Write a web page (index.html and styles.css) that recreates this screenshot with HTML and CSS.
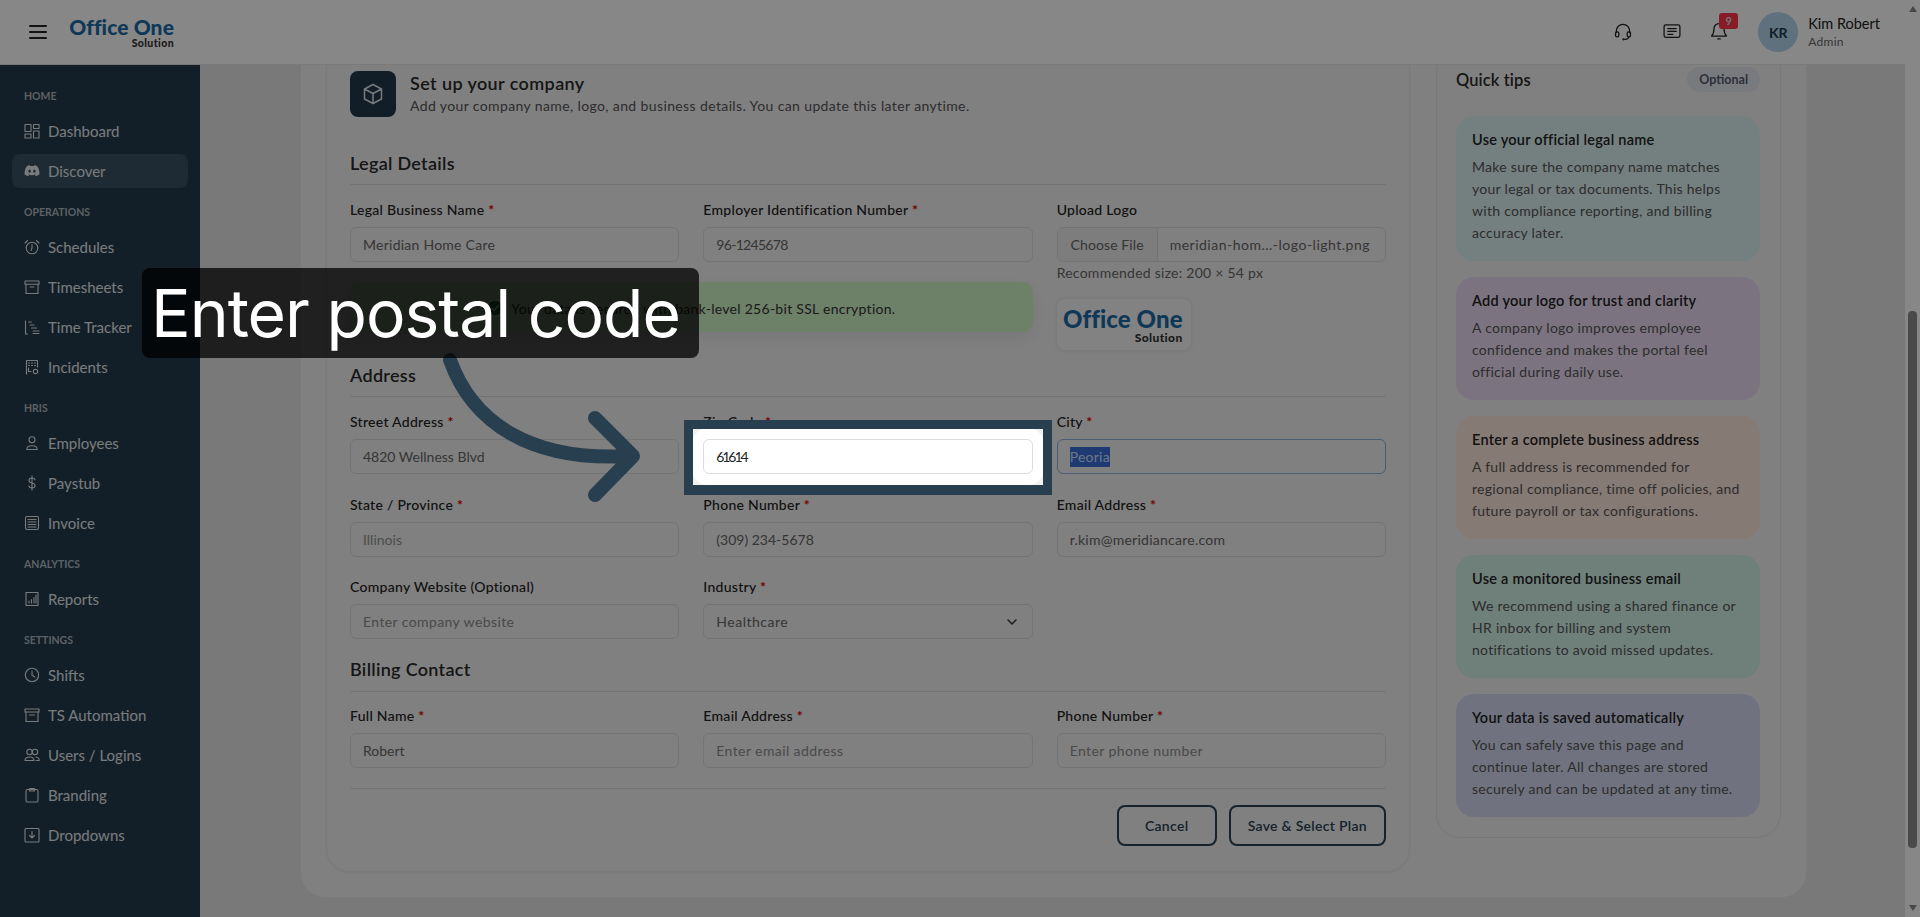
FILE: index.html
```html
<!DOCTYPE html>
<html lang="en">
<head>
<meta charset="utf-8">
<title>Office One Solution</title>
<link rel="stylesheet" href="styles.css">
</head>
<body>
<div class="app">
  <header class="topbar">
    <button class="burger" aria-label="Menu"><span></span><span></span><span></span></button>
    <div class="logo"><span class="logo-main">Office One</span><span class="logo-sub">Solution</span></div>
    <div class="top-actions">
      <svg class="top-icon" viewBox="0 0 24 24"><path d="M4 14v-2a8 8 0 0 1 16 0v2"/><rect x="3" y="13" width="4" height="6" rx="1.6"/><rect x="17" y="13" width="4" height="6" rx="1.6"/><path d="M19 19c0 2-2 3-5 3"/><circle cx="12.5" cy="22" r=".6"/></svg>
      <svg class="top-icon" viewBox="0 0 24 24"><rect x="2.5" y="4.5" width="19" height="15" rx="2"/><path d="M7 9h10M7 12.5h10M7 16h6"/></svg>
      <div class="bell">
        <svg class="top-icon" viewBox="0 0 24 24"><path d="M12 3a6 6 0 0 0-6 6c0 5-1 7-3 9h18c-2-2-3-4-3-9a6 6 0 0 0-6-6z"/><path d="M10.5 21.5h3"/></svg>
        <span class="badge">9</span>
      </div>
      <div class="avatar">KR</div>
      <div class="who"><div class="who-name">Kim Robert</div><div class="who-role">Admin</div></div>
    </div>
  </header>
  <div class="body-row">
    <nav class="sidebar">
      <div class="nav-label">Home</div>
      <a class="nav-item"><svg viewBox="0 0 16 16"><rect x="1" y="1.5" width="6" height="7"/><rect x="9.5" y="1.5" width="5.5" height="4"/><rect x="1" y="11" width="6" height="4"/><rect x="9.5" y="8" width="5.5" height="7"/></svg>Dashboard</a>
      <a class="nav-item active"><svg viewBox="0 0 16 16" class="solid"><path d="M13.2 3.2A12 12 0 0 0 10.2 2.3l-.4.8a11 11 0 0 0-3.6 0l-.4-.8a12 12 0 0 0-3 .9C.9 6 .4 8.7.6 11.4a12 12 0 0 0 3.7 1.9l.8-1.3-1.2-.6.3-.2a8.600 8.600 0 0 0 7.600 0l.3.2-1.2.6.8 1.3a12 12 0 0 0 3.700-1.900c.3-3.100-.5-5.800-2.200-8.200zM5.600 9.800c-.7 0-1.300-.7-1.300-1.500s.6-1.500 1.300-1.500 1.300.7 1.300 1.500-.6 1.500-1.300 1.500zm4.800 0c-.7 0-1.300-.7-1.300-1.500s.6-1.500 1.300-1.500 1.300.7 1.300 1.500-.6 1.500-1.300 1.500z"/></svg>Discover</a>
      <div class="nav-label">Operations</div>
      <a class="nav-item"><svg viewBox="0 0 16 16"><circle cx="8" cy="9" r="5.800"/><path d="M8 5.500V9l-1 2.500M1 4l2.500-2.500M15 4l-2.500-2.500"/></svg>Schedules</a>
      <a class="nav-item"><svg viewBox="0 0 16 16"><rect x="1" y="2" width="14" height="3.200"/><path d="M2 5.200V14.500h12V5.200M6 8h4"/></svg>Timesheets</a>
      <a class="nav-item"><svg viewBox="0 0 16 16"><path d="M1.500 2v13M1.500 15h2M4.500 3h3M6 6h4M7.500 9h5M9 12h6M9 14.500h6"/></svg>Time Tracker</a>
      <a class="nav-item"><svg viewBox="0 0 16 16"><path d="M2.500 15V1.500h11V8M4.500 4h1M7.500 4h1M10.500 4h1M4.500 6.500h1M7.500 6.500h1M10.500 6.500h1M4.500 9v3.500h2.500"/><circle cx="11.500" cy="12.500" r="2.200"/></svg>Incidents</a>
      <div class="nav-label">HRIS</div>
      <a class="nav-item"><svg viewBox="0 0 16 16"><circle cx="8" cy="4.800" r="3"/><path d="M2.800 14.500c0-2.600 1.800-3.800 5.200-3.800s5.200 1.200 5.200 3.800z"/></svg>Employees</a>
      <a class="nav-item"><svg viewBox="0 0 16 16"><path d="M11 4.800C10.500 3.500 9.500 3 8 3c-1.800 0-3 .9-3 2.400C5 9 11 7 11 10.600 11 12.100 9.800 13 8 13c-1.600 0-2.700-.6-3.200-2M8 1v14"/></svg>Paystub</a>
      <a class="nav-item"><svg viewBox="0 0 16 16"><rect x="1.500" y="1.500" width="13" height="13" rx="1.500"/><path d="M4 4.500h8M4 7h8M4 9.500h8M4 12h8"/></svg>Invoice</a>
      <div class="nav-label">Analytics</div>
      <a class="nav-item"><svg viewBox="0 0 16 16"><path d="M2 1.500h12v13H2zM5 12V10M7.500 12V8.500M10 12V6.500M12 12V4"/></svg>Reports</a>
      <div class="nav-label">Settings</div>
      <a class="nav-item"><svg viewBox="0 0 16 16"><circle cx="8" cy="8" r="6.700"/><path d="M8 4v4.300l2.800 1.700"/></svg>Shifts</a>
      <a class="nav-item"><svg viewBox="0 0 16 16"><rect x="1" y="2" width="14" height="3"/><path d="M2 5v9.500h12V5M5.500 8h5"/></svg>TS Automation</a>
      <a class="nav-item"><svg viewBox="0 0 16 16"><circle cx="5.500" cy="5" r="2.700"/><circle cx="11" cy="5" r="2.700"/><path d="M1 13.500c0-2.500 1.800-3.500 4.500-3.500s4.500 1 4.500 3.500zM12 10c2 .2 3.200 1.300 3.200 3.500H12"/></svg>Users / Logins</a>
      <a class="nav-item"><svg viewBox="0 0 16 16"><rect x="2" y="2.500" width="12" height="12.500" rx="1.500"/><path d="M5.500 1.500h5v2.500h-5z"/></svg>Branding</a>
      <a class="nav-item"><svg viewBox="0 0 16 16"><rect x="1" y="1.500" width="14" height="13.500" rx="1"/><path d="M8 4.500v6.500M5.500 8.500 8 11l2.500-2.500"/></svg>Dropdowns</a>
    </nav>
    <main class="content">
      <div class="page-card">
        <section class="form-card">
          <div class="intro">
            <div class="intro-icon"><svg viewBox="0 0 24 24"><path d="M12 2.500 20.500 7v10L12 21.500 3.500 17V7zM3.500 7 12 11.500 20.500 7M12 11.500v10"/></svg></div>
            <div><h1>Set up your company</h1><p>Add your company name, logo, and business details. You can update this later anytime.</p></div>
          </div>
          <h2 class="sec sec-legal">Legal Details</h2>
          <div class="legal">
            <div class="field"><label>Legal Business Name <b>*</b></label><input readonly value="Meridian Home Care"></div>
            <div class="field"><label>Employer Identification Number <b>*</b></label><input class="num" readonly value="96-1245678"></div>
            <div class="field upload">
              <label>Upload Logo</label>
              <div class="file"><span class="file-btn">Choose File</span><span class="file-name">meridian-hom...-logo-light.png</span></div>
              <div class="hint">Recommended size: 200 × 54 px</div>
              <div class="logo-box"><span class="logo-main">Office One</span><span class="logo-sub">Solution</span></div>
            </div>
            <div class="alert"><svg viewBox="0 0 16 16"><circle cx="8" cy="8" r="8"/><path d="m4.500 8 2.500 2.500 4.500-5"/></svg>Your data is secured with bank-level 256-bit SSL encryption.</div>
          </div>
          <h2 class="sec sec-address">Address</h2>
          <div class="grid">
            <div class="field"><label>Street Address <b>*</b></label><input class="tight" readonly value="4820 Wellness Blvd"></div>
            <div class="field"><label>Zip Code <b>*</b></label><input class="zip" readonly value="61614"></div>
            <div class="field"><label>City <b>*</b></label><div class="input focus"><span class="sel">Peoria</span></div></div>
            <div class="field"><label>State / Province <b>*</b></label><input class="muted tight" readonly value="Illinois"></div>
            <div class="field"><label>Phone Number <b>*</b></label><input class="tight" readonly value="(309) 234-5678"></div>
            <div class="field"><label>Email Address <b>*</b></label><input readonly value="r.kim@meridiancare.com"></div>
            <div class="field"><label>Company Website (Optional)</label><input class="ph" readonly placeholder="Enter company website"></div>
            <div class="field"><label>Industry <b>*</b></label><div class="input select">Healthcare<svg viewBox="0 0 12 12"><path d="m2 4 4 4 4-4"/></svg></div></div>
          </div>
          <h2 class="sec sec-billing">Billing Contact</h2>
          <div class="grid">
            <div class="field"><label>Full Name <b>*</b></label><input class="tight" readonly value="Robert"></div>
            <div class="field"><label>Email Address <b>*</b></label><input class="ph" readonly placeholder="Enter email address"></div>
            <div class="field"><label>Phone Number <b>*</b></label><input class="ph" readonly placeholder="Enter phone number"></div>
          </div>
          <div class="actions"><button>Cancel</button><button>Save &amp; Select Plan</button></div>
        </section>
        <aside class="tips">
          <div class="tips-head"><h3>Quick tips</h3><span class="pill">Optional</span></div>
          <div class="tip t1"><h4>Use your official legal name</h4><p>Make sure the company name matches<br>your legal or tax documents. This helps<br>with compliance reporting, and billing<br>accuracy later.</p></div>
          <div class="tip t2"><h4>Add your logo for trust and clarity</h4><p>A company logo improves employee<br>confidence and makes the portal feel<br>official during daily use.</p></div>
          <div class="tip t3"><h4>Enter a complete business address</h4><p>A full address is recommended for<br>regional compliance, time off policies, and<br>future payroll or tax configurations.</p></div>
          <div class="tip t4"><h4>Use a monitored business email</h4><p>We recommend using a shared finance or<br>HR inbox for billing and system<br>notifications to avoid missed updates.</p></div>
          <div class="tip t5"><h4>Your data is saved automatically</h4><p>You can safely save this page and<br>continue later. All changes are stored<br>securely and can be updated at any time.</p></div>
        </aside>
      </div>
    </main>
  </div>
</div>
<div class="scrollbar"><span class="sb-up"></span><span class="sb-thumb"></span><span class="sb-down"></span></div>

<div class="spot"></div>
<svg class="arrow" viewBox="0 0 210 155"><path d="M10 10C32 72 90 112 190 106M155 68l38 38-38 39"/></svg>
<div class="callout">Enter postal code</div>
</body>
</html>
```
FILE: styles.css
```css
* { box-sizing: border-box; }
html, body { margin: 0; height: 100%; }
body {
  width: 1920px; height: 917px; overflow: hidden; display: flex;
  font-family: "Lato", "Liberation Sans", sans-serif;
  font-size: 14px; color: #333; background: #e4e4e4; position: relative;
}
.app { flex: 1; min-width: 0; display: flex; flex-direction: column; height: 917px; }

/* top bar */
.topbar {
  flex: 0 0 65px; height: 65px; display: flex; align-items: center; background: #fff;
  border-bottom: 1px solid #e6e6e6; padding-left: 29px; position: relative; z-index: 2;
}
.burger { width: 18px; height: 14px; padding: 0; border: 0; background: none; display: flex; flex-direction: column; justify-content: space-between; }
.burger span { display: block; height: 2px; background: #222; border-radius: 1px; }
.logo { margin-left: 23px; width: 104px; display: flex; flex-direction: column; align-items: flex-end; }
.logo-main { font-weight: 900; font-size: 21px; line-height: 22px; color: #1c6aa6; white-space: nowrap; letter-spacing: .1px; }
.logo-sub { font-weight: 900; font-size: 10.500px; line-height: 11px; color: #333; letter-spacing: .4px; }
.top-actions { margin-left: auto; display: flex; align-items: center; padding-right: 25px; }
.top-icon { width: 20px; height: 20px; margin-bottom: 3px; fill: none; stroke: #222; stroke-width: 1.500; stroke-linecap: round; stroke-linejoin: round; display: block; }
.top-actions > .top-icon:first-child { margin-right: 29px; }
.bell { position: relative; margin-left: 27px; margin-right: 29px; }
.badge {
  position: absolute; left: 10px; top: -8px; width: 19px; height: 16px; border-radius: 3px;
  background: #ff3349; color: #ddd; font-size: 11px; font-weight: 700; line-height: 16px; text-align: center;
}
.avatar { width: 40px; height: 40px; border-radius: 50%; background: #b4d6ec; color: #1e3a4d; display: flex; align-items: center; justify-content: center; font-size: 14px; font-weight: 700; }
.who { margin-left: 10px; }
.who-name { font-size: 14.500px; line-height: 18px; color: #222; }
.who-role { font-size: 12px; line-height: 16px; color: #666; margin-top: 1px; letter-spacing: .3px; }

.body-row { flex: 1; min-height: 0; display: flex; }

/* sidebar */
.sidebar { flex: 0 0 200px; background: #233b4c; padding: 22px 12px 0; overflow: hidden; }
.nav-label { height: 18px; line-height: 18px; margin: 15px 12px 9px; font-size: 10.500px; font-weight: 700; text-transform: uppercase; color: #adb7bf; }
.nav-label:first-child { margin-top: 0; }
.nav-item {
  display: flex; align-items: center; gap: 8px; height: 34px; margin-bottom: 6px; padding-left: 12px;
  border-radius: 8px; font-size: 15px; color: #e4e9ed;
}
.nav-item svg { width: 16px; height: 16px; flex: none; fill: none; stroke: currentColor; stroke-width: 1.100; stroke-linecap: round; stroke-linejoin: round; }
.nav-item svg.solid { fill: currentColor; stroke: none; }
.nav-item.active { background: #395162; }

/* scrolled content */
.content { flex: 1; min-width: 0; overflow: hidden; display: flex; flex-direction: column; justify-content: flex-end; padding: 0 99px 20px 101px; }
.page-card { flex: none; background: #f1f1f1; border-radius: 0 0 24px 24px; box-shadow: 0 0 0 1px #e6e6e6; padding: 25px; display: flex; gap: 26px; align-items: flex-start; }
.form-card { flex: 1; min-width: 0; background: #f1f1f1; border: 1px solid #e6e6e6; border-radius: 24px; padding: 24px 23px 25px 23px; box-shadow: 0 1px 2px rgba(0,0,0,.05); }

.intro { display: flex; gap: 14px; height: 46px; }
.intro-icon { width: 46px; height: 46px; border-radius: 8px; background: #223a4b; display: flex; align-items: center; justify-content: center; }
.intro-icon svg { width: 24px; height: 24px; fill: none; stroke: #dfe6eb; stroke-width: 1.500; stroke-linejoin: round; }
h1 { margin: 0; font-size: 18px; line-height: 24px; font-weight: 600; letter-spacing: .4px; color: #2a2a2a; }
.intro p { margin: 0; font-size: 14px; line-height: 22px; color: #555; letter-spacing: .38px; }

.sec { margin: 0 0 15px; padding-bottom: 9px; border-bottom: 1px solid #dcdcdc; font-size: 18px; line-height: 24px; font-weight: 600; letter-spacing: .3px; color: #2a2a2a; }
.sec-legal { margin-top: 34px; }
.sec-address { margin-top: 13px; }
.sec-billing { margin-top: 18px; margin-bottom: 14px; padding-bottom: 10px; }

.grid, .legal { display: grid; grid-template-columns: repeat(3, minmax(0, 1fr)); column-gap: 24px; row-gap: 20.500px; }
.legal { row-gap: 20px; grid-template-rows: 62px 1fr; }
.upload { grid-column: 3; grid-row: 1 / span 2; }
.alert { grid-column: 1 / span 2; grid-row: 2; align-self: start; height: 50px; padding-top: 2px; border-radius: 10px; background: #cef1c4; display: flex; align-items: center; justify-content: center; gap: 8px; color: #333; letter-spacing: .28px; box-shadow: 0 6px 14px rgba(0,0,0,.06); }
.alert svg { width: 16px; height: 16px; fill: #2c7a3f; stroke: #fff; stroke-width: 1.500; stroke-linecap: round; }

.field label { display: block; height: 20px; line-height: 20px; margin-bottom: 7px; color: #222; font-size: 14px; font-weight: 500; letter-spacing: .28px; }
.field b { color: #e00000; font-weight: 700; }
input, .input {
  display: block; width: 100%; height: 35px; padding: 0 12px; border: 1px solid #dcdcdc; border-radius: 6px;
  background: #f1f1f1; font: inherit; font-size: 14px; color: #666; line-height: 33px; outline: 0; letter-spacing: .25px;
}
input::placeholder { color: #8c8c8c; opacity: 1; }
input.muted { color: #909090; }
input.tight { letter-spacing: 0; }
input.num { letter-spacing: -.7px; }
input.ph { letter-spacing: .4px; }
input.zip { background: #fff; color: #222; letter-spacing: -2.100px; box-shadow: 0 0 0 11px #fff; }
.input.focus { border-color: #8cb0d8; }
.sel { background: #3b6fd8; color: #cbe0ff; display: inline-block; line-height: 20px; }
.select { display: flex; align-items: center; justify-content: space-between; letter-spacing: .5px; padding-right: 14px; }
.select svg { width: 12px; height: 12px; fill: none; stroke: #333; stroke-width: 1.500; stroke-linecap: round; stroke-linejoin: round; }

.file { height: 35px; display: flex; border: 1px solid #dcdcdc; border-radius: 6px; line-height: 33px; color: #666; overflow: hidden; }
.file-btn { width: 100px; text-align: center; border-right: 1px solid #dcdcdc; flex: none; background: #ececec; letter-spacing: .1px; }
.file-name { padding-left: 12px; white-space: nowrap; letter-spacing: .5px; }
.hint { height: 18px; line-height: 18px; margin-top: 2px; color: #666; font-size: 14px; letter-spacing: .25px; }
.logo-box { width: 134px; height: 51px; margin-top: 17px; background: #f6f6f6; border-radius: 8px; box-shadow: 0 0 4px rgba(0,0,0,.1); display: flex; flex-direction: column; align-items: flex-end; justify-content: center; padding-right: 8px; }
.logo-box .logo-main { font-size: 24px; line-height: 26px; }
.logo-box .logo-sub { font-size: 12px; line-height: 12px; }

.actions { margin-top: 20px; padding-top: 16px; border-top: 1px solid #dcdcdc; display: flex; justify-content: flex-end; gap: 12px; }
.actions button { height: 41px; padding: 0 17px; min-width: 100px; background: none; border: 2px solid #2a4253; border-radius: 8px; color: #2a4253; font: inherit; font-size: 14px; font-weight: 600; letter-spacing: .3px; }

/* quick tips */
.tips { flex: 0 0 345px; background: #f1f1f1; border: 1px solid #e2e2e2; border-radius: 24px; padding: 20px 20px 20px 19px; }
.tips-head { display: flex; justify-content: space-between; align-items: center; height: 25px; margin-bottom: 24px; }
h3 { margin: 0; font-size: 16.500px; font-weight: 600; letter-spacing: .1px; color: #2a2a2a; }
.pill { height: 25px; line-height: 25px; padding: 0 12px; border-radius: 13px; background: #e4e7ec; color: #555c6c; font-size: 12.500px; font-weight: 700; }
.tip { border-radius: 18px; padding: 14px 16px 17px; margin-bottom: 16px; }
.tip:last-child { margin-bottom: 0; }
.tip h4 { margin: 0 0 6px; font-size: 14.500px; line-height: 20px; font-weight: 600; letter-spacing: .25px; color: #222; }
.tip p { margin: 0; font-size: 14px; line-height: 22px; color: #555; white-space: nowrap; letter-spacing: .28px; }
.t1 { background: #dbf1f1; }
.t2 { background: #e8dbf1; }
.t3 { background: #fee6db; }
.t4 { background: #d1f1e8; }
.t5 { background: #d4d8f0; }

/* browser scrollbar */
.scrollbar { flex: 0 0 15px; height: 917px; background: #fff; position: relative; display: flex; flex-direction: column; align-items: center; }
.sb-up, .sb-down { width: 0; height: 0; border-left: 4px solid transparent; border-right: 4px solid transparent; }
.sb-up { margin-top: 6px; border-bottom: 6px solid #888; }
.sb-thumb { width: 9px; height: 537px; margin-top: 299px; border-radius: 4px; background: #8c8c8c; }
.sb-down { margin-top: auto; margin-bottom: 6px; border-top: 6px solid #888; }

/* walkthrough overlay */
.spot { position: absolute; left: 684px; top: 420px; width: 368px; height: 75px; border: 9px solid #283f50; border-bottom-width: 10px; box-shadow: 0 0 0 2400px rgba(0,0,0,.47); z-index: 10; }
.arrow { position: absolute; left: 440px; top: 350px; width: 210px; height: 155px; z-index: 11; fill: none; stroke: #283f50; stroke-width: 14; stroke-linecap: round; stroke-linejoin: round; }
.callout { position: absolute; left: 142px; top: 268px; width: 557px; height: 90px; border-radius: 8px; background: rgba(0,0,0,.75); color: #fff; font-family: "Inter", sans-serif; font-size: 66px; line-height: 90px; letter-spacing: -1px; padding-left: 9px; white-space: nowrap; z-index: 12; }
```
